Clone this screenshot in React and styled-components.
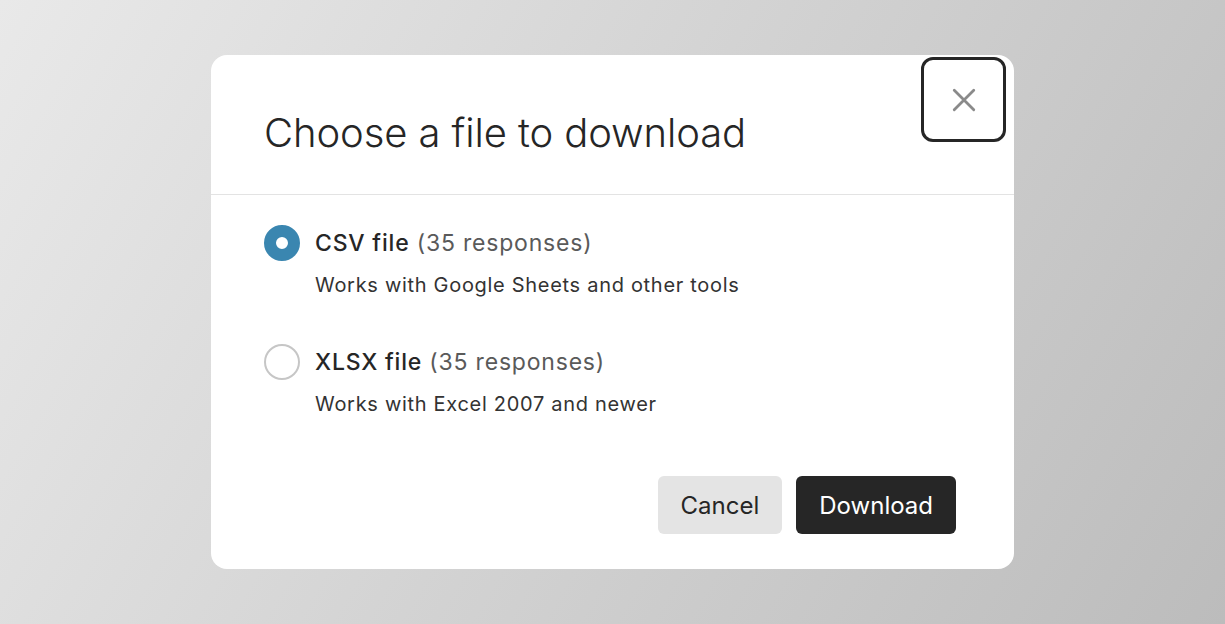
import { useState } from "react";
import styled, { createGlobalStyle } from "styled-components";

const GlobalStyle = createGlobalStyle`
  html, body {
    margin: 0;
    padding: 0;
  }
  body {
    font-family: Inter, "Noto Sans", sans-serif;
    color: #262626;
  }
`;

const files = [
  {
    id: "csv",
    name: "CSV file",
    count: "(35 responses)",
    hint: "Works with Google Sheets and other tools",
  },
  {
    id: "xlsx",
    name: "XLSX file",
    count: "(35 responses)",
    hint: "Works with Excel 2007 and newer",
  },
];

function App() {
  const [choice, setChoice] = useState("csv");

  return (
    <>
      <GlobalStyle />
      <Backdrop>
        <Dialog>
          <Header>
            <Title>Choose a file to download</Title>
            <CloseButton aria-label="Close">
              <svg width="26" height="26" viewBox="0 0 24 24" fill="none">
                <path
                  d="M3 3 L21 21 M21 3 L3 21"
                  stroke="#8a8a8a"
                  strokeWidth="2.6"
                  strokeLinecap="round"
                />
              </svg>
            </CloseButton>
          </Header>
          <Body>
            {files.map((file) => (
              <Option key={file.id} onClick={() => setChoice(file.id)}>
                <Radio $checked={choice === file.id} />
                <OptionText>
                  <OptionLabel>
                    <strong>{file.name}</strong> <span>{file.count}</span>
                  </OptionLabel>
                  <OptionHint>{file.hint}</OptionHint>
                </OptionText>
              </Option>
            ))}
          </Body>
          <Footer>
            <Button>Cancel</Button>
            <Button $primary>Download</Button>
          </Footer>
        </Dialog>
      </Backdrop>
    </>
  );
}

export default App;

const Backdrop = styled.div`
  width: 1225px;
  height: 624px;
  box-sizing: border-box;
  padding-top: 55px;
  display: flex;
  justify-content: center;
  align-items: flex-start;
  background: linear-gradient(120deg, #e9e9e9 0%, #d2d2d2 50%, #bcbcbc 100%);
`;

const Dialog = styled.div`
  width: 803px;
  height: 514px;
  box-sizing: border-box;
  background: #fff;
  border-radius: 16px;
  display: flex;
  flex-direction: column;
`;

const Header = styled.div`
  position: relative;
  height: 140px;
  box-sizing: border-box;
  padding: 54px 53px 0;
  border-bottom: 1px solid #e3e3e3;
`;

const Title = styled.h1`
  margin: 0;
  font-size: 40px;
  line-height: 48px;
  font-weight: 300;
  letter-spacing: -0.1px;
  color: #262626;
`;

const CloseButton = styled.button`
  position: absolute;
  top: 2px;
  right: 8px;
  width: 85px;
  height: 85px;
  box-sizing: border-box;
  border: 3px solid #262626;
  border-radius: 12px;
  background: transparent;
  display: flex;
  align-items: center;
  justify-content: center;
  padding: 0;
  cursor: pointer;
`;

const Body = styled.div`
  padding: 30px 53px 0;
  display: flex;
  flex-direction: column;
  gap: 47px;
`;

const Option = styled.label`
  display: flex;
  align-items: flex-start;
  gap: 15px;
  cursor: pointer;
`;

const Radio = styled.span`
  flex: none;
  width: 36px;
  height: 36px;
  box-sizing: border-box;
  border-radius: 50%;
  border: ${(p) => (p.$checked ? "12px solid #3a86b0" : "2px solid #c6c6c6")};
  background: #fff;
`;

const OptionText = styled.div`
  display: flex;
  flex-direction: column;
  padding-top: 3px;
`;

const OptionLabel = styled.div`
  font-size: 23px;
  line-height: 30px;
  letter-spacing: 0.8px;
  color: #262626;

  strong {
    font-weight: 500;
  }

  span {
    color: #5a5a5a;
    font-weight: 400;
  }
`;

const OptionHint = styled.div`
  margin-top: 15px;
  font-size: 20px;
  line-height: 24px;
  letter-spacing: 0.7px;
  color: #333;
`;

const Footer = styled.div`
  margin-top: auto;
  padding: 0 58px 35px;
  display: flex;
  justify-content: flex-end;
  gap: 14px;
`;

const Button = styled.button`
  height: 58px;
  padding: 0 23px;
  border: none;
  border-radius: 6px;
  font-family: Inter, "Noto Sans", sans-serif;
  font-size: 24px;
  font-weight: 400;
  background: ${(p) => (p.$primary ? "#262626" : "#e4e4e4")};
  color: ${(p) => (p.$primary ? "#fff" : "#262626")};
  cursor: pointer;
`;
